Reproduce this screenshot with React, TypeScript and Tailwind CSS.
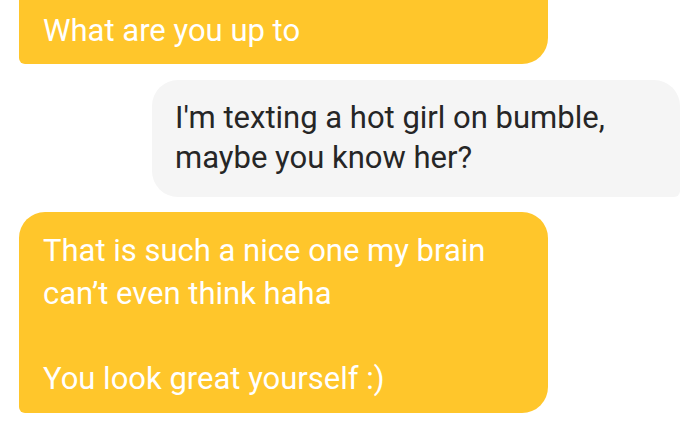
const messages = [
  {
    id: "m1",
    mine: false,
    lines: ["What are you up to"],
  },
  {
    id: "m2",
    mine: true,
    lines: ["I'm texting a hot girl on bumble,", "maybe you know her?"],
  },
  {
    id: "m3",
    mine: false,
    lines: ["That is such a nice one my brain", "can’t even think haha", "", "You look great yourself :)"],
  },
];

export default function App() {
  return (
    <div className="w-[700px] h-[424px] overflow-hidden bg-white font-['Roboto',sans-serif] text-[31px]">
      <div className="flex flex-col gap-[16px]">
        {/* cut-off incoming bubble */}
        <div className="ml-[19px] w-[529px] h-[64px] rounded-br-[26px] rounded-bl-[6px] bg-[#ffc62b] pl-[24px] pt-[10px] text-white leading-[42px]">
          {messages[0].lines[0]}
        </div>

        {/* outgoing */}
        <div className="ml-auto mr-[20px] w-[528px] h-[117px] rounded-tl-[26px] rounded-tr-[26px] rounded-bl-[26px] rounded-br-[6px] bg-[#f5f5f5] pl-[23px] pt-[18px] text-[#262626] leading-[40px]">
          {messages[1].lines.map((l) => (
            <div key={l}>{l}</div>
          ))}
        </div>

        {/* incoming */}
        <div className="-mt-[1px] ml-[19px] w-[529px] h-[201px] rounded-tl-[26px] rounded-tr-[26px] rounded-br-[26px] rounded-bl-[6px] bg-[#ffc62b] pl-[24px] pt-[18px] text-white leading-[42.5px]">
          {messages[2].lines.map((l, i) => (
            <div key={i} className="h-[42.5px]">{l}</div>
          ))}
        </div>
      </div>
    </div>
  );
}
